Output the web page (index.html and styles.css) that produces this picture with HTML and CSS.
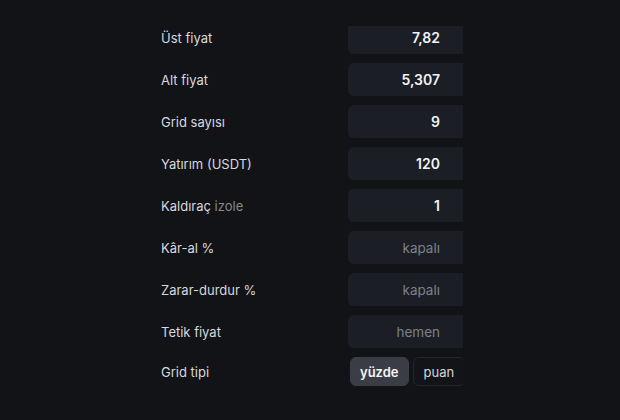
FILE: index.html
```html
<!DOCTYPE html>
<html lang="tr">
<head>
<meta charset="utf-8">
<link rel="stylesheet" href="styles.css">
</head>
<body>
<div class="viewport">
  <div class="form">
    <div class="row"><span class="label">Üst fiyat</span><div class="field value">7,82</div></div>
    <div class="row"><span class="label">Alt fiyat</span><div class="field value">5,307</div></div>
    <div class="row"><span class="label">Grid sayısı</span><div class="field value">9</div></div>
    <div class="row"><span class="label">Yatırım (USDT)</span><div class="field value">120</div></div>
    <div class="row"><span class="label">Kaldıraç <span class="muted">izole</span></span><div class="field value">1</div></div>
    <div class="row"><span class="label">Kâr-al %</span><div class="field placeholder">kapalı</div></div>
    <div class="row"><span class="label">Zarar-durdur %</span><div class="field placeholder">kapalı</div></div>
    <div class="row"><span class="label">Tetik fiyat</span><div class="field placeholder">hemen</div></div>
    <div class="row short"><span class="label">Grid tipi</span>
      <div class="toggle"><span class="opt active">yüzde</span><span class="opt">puan</span></div>
    </div>
  </div>
</div>
</body>
</html>
```

FILE: styles.css
```css
html, body {
  margin: 0;
  padding: 0;
  background: #121317;
  font-family: Inter, "Noto Sans", "Liberation Sans", sans-serif;
}
.viewport {
  margin: 26px 0 0 161px;
  width: 302px;
  height: 394px;
  overflow: hidden;
}
.form {
  margin-top: -5px;
  display: flex;
  flex-direction: column;
  gap: 9px;
}
.row {
  display: grid;
  grid-template-columns: 187px 140px;
  align-items: center;
  height: 33px;
}
.row.short { height: 29px; }
.label {
  font-size: 13px;
  color: #d6d9de;
  white-space: nowrap;
}
.muted { color: #858992; }
.field {
  height: 33px;
  box-sizing: border-box;
  background: #1b1e25;
  border-radius: 6px;
  padding-right: 48px;
  display: flex;
  align-items: center;
  justify-content: flex-end;
  font-size: 14px;
}
.value { color: #f2f3f5; font-weight: 600; }
.placeholder { color: #7d818a; font-size: 13.5px; }
.toggle {
  display: flex;
  gap: 4px;
  height: 29px;
  padding-left: 2px;
}
.opt {
  display: flex;
  align-items: center;
  padding: 0 10px;
  border-radius: 6px;
  font-size: 13px;
  color: #d3d6dc;
  border: 1px solid #23262d;
  background: #131418;
  box-sizing: border-box;
}
.opt.active {
  background: #3a3d45;
  border-color: #3a3d45;
  color: #f4f5f7;
  font-weight: 600;
  padding: 0 9px;
}
```
